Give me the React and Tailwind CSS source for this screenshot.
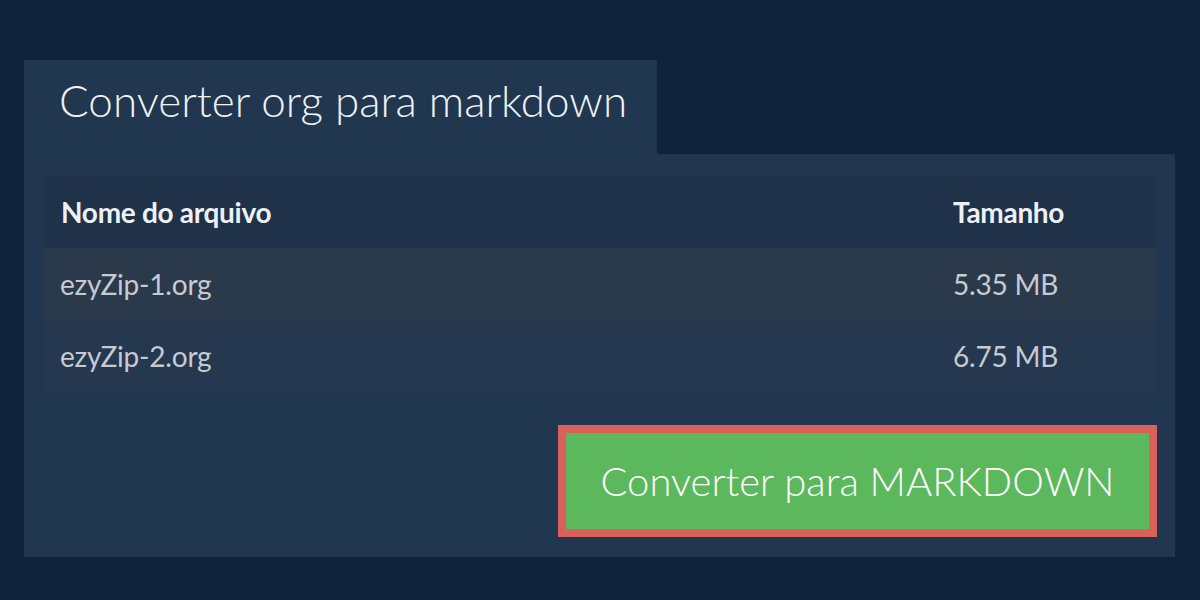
const files = [
  { name: "ezyZip-1.org", size: "5.35 MB", bg: "bg-[#2b3a4b]" },
  { name: "ezyZip-2.org", size: "6.75 MB", bg: "bg-[#25384f]" },
];

export default function App() {
  return (
    <div className="w-[1200px] h-[600px] bg-[#10233a] pt-[60px] px-6 font-['Lato','Liberation_Sans',sans-serif]">
      <div className="w-[633px] h-[94px] bg-[#21364f] pl-[35px] pt-[14px]">
        <h1 className="text-[44px] font-light text-[#eef1f4] leading-[52px]">
          Converter org para markdown
        </h1>
      </div>
      <div className="w-[1151px] h-[403px] bg-[#21364f] pt-[21px] pl-5 pr-[19px]">
        <div className="w-[1112px]">
          <div className="grid grid-cols-[909px_1fr] h-[73px] items-center bg-[#1f3249] text-[28px] font-bold text-[#eef1f4] tracking-[-0.3px]">
            <div className="pl-[17px]">Nome do arquivo</div>
            <div>Tamanho</div>
          </div>
          {files.map((f) => (
            <div
              key={f.name}
              className={`grid grid-cols-[909px_1fr] h-[72px] items-center text-[28px] text-[#c6cbd2] tracking-[-0.2px] ${f.bg}`}
            >
              <div className="pl-[16px]">{f.name}</div>
              <div>{f.size}</div>
            </div>
          ))}
        </div>
        <div className="flex justify-end w-[1113px] mt-[33px]">
          <button className="w-[599px] h-[112px] bg-[#5cb85c] border-[8px] border-[#da605c] text-white text-[40px] font-light">
            Converter para MARKDOWN
          </button>
        </div>
      </div>
    </div>
  );
}
